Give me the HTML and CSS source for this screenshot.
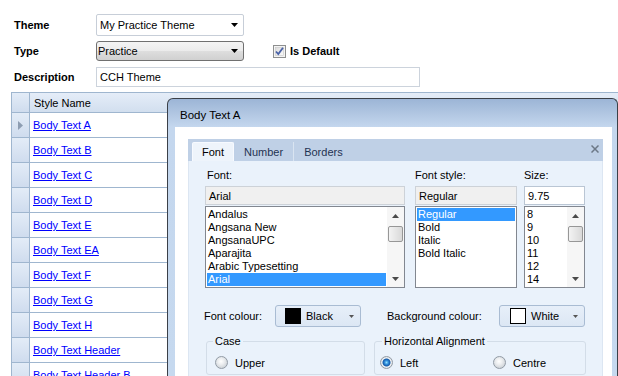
FILE: index.html
```html
<!DOCTYPE html>
<html>
<head>
<meta charset="utf-8">
<title>Theme</title>
<link rel="stylesheet" href="styles.css">
</head>
<body>
<div class="form">
  <div class="frow r1">
    <span class="lbl">Theme</span>
    <div class="combo theme"><span>My Practice Theme</span><svg class="arr" width="7" height="4" viewBox="0 0 7 4"><path d="M0 0H7L3.5 4Z" fill="#000"/></svg></div>
  </div>
  <div class="frow r2">
    <span class="lbl">Type</span>
    <div class="combo type"><span>Practice</span><svg class="arr" width="7" height="4" viewBox="0 0 7 4"><path d="M0 0H7L3.5 4Z" fill="#000"/></svg></div>
    <svg class="chk" width="13" height="13" viewBox="0 0 13 13">
      <defs><linearGradient id="cg" x1="0" y1="0" x2="1" y2="1"><stop offset="0" stop-color="#dcdcdc"/><stop offset="1" stop-color="#fbfbfb"/></linearGradient></defs>
      <rect x="0.5" y="0.5" width="12" height="12" fill="#f4f4f4" stroke="#8e8f8f"/>
      <rect x="2.5" y="2.5" width="8" height="8" fill="url(#cg)" stroke="#c8c8c8" stroke-width="0.6"/>
      <path d="M3 6.5L5.3 9L10 2.8" fill="none" stroke="#4a62a8" stroke-width="1.8"/>
    </svg>
    <span class="chklbl">Is Default</span>
  </div>
  <div class="frow r3">
    <span class="lbl">Description</span>
    <div class="text desc">CCH Theme</div>
  </div>
</div>

<div class="grid">
  <div class="grow ghead"><div class="rh"></div><div class="cell">Style Name</div></div>
  <div class="grow"><div class="rh"><svg width="5" height="9" viewBox="0 0 5 9"><path d="M0 0L5 4.5L0 9Z" fill="#8d9db2"/></svg></div><div class="cell"><a href="#">Body Text A</a></div></div>
  <div class="grow"><div class="rh"></div><div class="cell"><a href="#">Body Text B</a></div></div>
  <div class="grow"><div class="rh"></div><div class="cell"><a href="#">Body Text C</a></div></div>
  <div class="grow"><div class="rh"></div><div class="cell"><a href="#">Body Text D</a></div></div>
  <div class="grow"><div class="rh"></div><div class="cell"><a href="#">Body Text E</a></div></div>
  <div class="grow"><div class="rh"></div><div class="cell"><a href="#">Body Text EA</a></div></div>
  <div class="grow"><div class="rh"></div><div class="cell"><a href="#">Body Text F</a></div></div>
  <div class="grow"><div class="rh"></div><div class="cell"><a href="#">Body Text G</a></div></div>
  <div class="grow"><div class="rh"></div><div class="cell"><a href="#">Body Text H</a></div></div>
  <div class="grow"><div class="rh"></div><div class="cell"><a href="#">Body Text Header</a></div></div>
  <div class="grow"><div class="rh"></div><div class="cell"><a href="#">Body Text Header B</a></div></div>
</div>

<div class="dialog">
  <div class="title">Body Text A</div>
  <div class="client">
    <div class="tabs">
      <div class="tabstrip">
        <div class="tab sel">Font</div>
        <div class="tab sep">Number</div>
        <div class="tab">Borders</div>
        <svg class="close" width="8" height="8" viewBox="0 0 8 8"><path d="M0.5 0.5L7.5 7.5M7.5 0.5L0.5 7.5" stroke="#6c7886" stroke-width="1.5"/></svg>
      </div>
      <div class="panel">
        <div class="fontrow">
          <div class="col c1">
            <div class="flabel">Font:</div>
            <div class="tbox ro">Arial</div>
            <div class="list">
              <div class="items">
                <div class="it">Andalus</div>
                <div class="it">Angsana New</div>
                <div class="it">AngsanaUPC</div>
                <div class="it">Aparajita</div>
                <div class="it">Arabic Typesetting</div>
                <div class="it on">Arial</div>
              </div>
              <div class="sb">
                <div class="sbtn"><svg width="7" height="4" viewBox="0 0 7 4"><path d="M0 4H7L3.5 0Z" fill="#4a4a4a"/></svg></div>
                <div class="thumb"></div>
                <div class="sbtn dn"><svg width="7" height="4" viewBox="0 0 7 4"><path d="M0 0H7L3.5 4Z" fill="#4a4a4a"/></svg></div>
              </div>
            </div>
          </div>
          <div class="col c2">
            <div class="flabel">Font style:</div>
            <div class="tbox ro">Regular</div>
            <div class="list">
              <div class="items">
                <div class="it on">Regular</div>
                <div class="it">Bold</div>
                <div class="it">Italic</div>
                <div class="it">Bold Italic</div>
              </div>
            </div>
          </div>
          <div class="col c3">
            <div class="flabel">Size:</div>
            <div class="tbox">9.75</div>
            <div class="list">
              <div class="items">
                <div class="it">8</div>
                <div class="it">9</div>
                <div class="it">10</div>
                <div class="it">11</div>
                <div class="it">12</div>
                <div class="it">14</div>
              </div>
              <div class="sb">
                <div class="sbtn"><svg width="7" height="4" viewBox="0 0 7 4"><path d="M0 4H7L3.5 0Z" fill="#4a4a4a"/></svg></div>
                <div class="thumb"></div>
                <div class="sbtn dn"><svg width="7" height="4" viewBox="0 0 7 4"><path d="M0 0H7L3.5 4Z" fill="#4a4a4a"/></svg></div>
              </div>
            </div>
          </div>
        </div>

        <div class="colrow">
          <span class="clabel l1">Font colour:</span>
          <div class="cbtn b1"><span class="sw black"></span><span class="cname">Black</span><svg class="carr" width="5" height="3" viewBox="0 0 5 3"><path d="M0 0H5L2.5 3Z" fill="#555"/></svg></div>
          <span class="clabel l2">Background colour:</span>
          <div class="cbtn b2"><span class="sw white"></span><span class="cname">White</span><svg class="carr" width="5" height="3" viewBox="0 0 5 3"><path d="M0 0H5L2.5 3Z" fill="#555"/></svg></div>
        </div>

        <div class="groups">
          <fieldset class="grp case">
            <legend>Case</legend>
            <div class="ropts">
              <label class="ropt"><span class="radio"></span><span>Upper</span></label>
            </div>
          </fieldset>
          <fieldset class="grp ha">
            <legend>Horizontal Alignment</legend>
            <div class="ropts">
              <label class="ropt w1"><span class="radio on"></span><span>Left</span></label>
              <label class="ropt"><span class="radio"></span><span>Centre</span></label>
            </div>
          </fieldset>
        </div>
      </div>
    </div>
  </div>
</div>
</body>
</html>
```

FILE: styles.css
```css
html, body {
  margin: 0;
  padding: 0;
  height: 376px;
  overflow: hidden;
  background: #fff;
}
body {
  font: 11px "Liberation Sans", Arial, sans-serif;
  color: #000;
}

/* top form */
.form {
  display: flex;
  flex-direction: column;
  padding: 14px 0 0 14px;
}
.frow {
  display: flex;
  align-items: center;
}
.r1 { height: 22px; }
.r2 { height: 20px; margin-top: 5px; }
.r3 { height: 20px; margin-top: 6px; }
.lbl {
  width: 82px;
  font-weight: bold;
}
.combo {
  box-sizing: border-box;
  height: 100%;
  width: 148px;
  display: flex;
  align-items: center;
  justify-content: space-between;
  padding: 0 5px 0 3px;
}
.theme {
  border: 1px solid #c7ced8;
  border-radius: 2px;
  background: #fff;
}
.type {
  border: 1px solid #707070;
  border-radius: 3px;
  padding-left: 1px;
  background: linear-gradient(#f4f4f4, #ebebeb 50%, #dedede 51%, #d0d0d0);
}
.chk { margin-left: 29px; }
.chklbl {
  margin-left: 4px;
  font-weight: bold;
}
.text {
  box-sizing: border-box;
  height: 100%;
  width: 324px;
  border: 1px solid #ccd3dc;
  padding-left: 3px;
  display: flex;
  align-items: center;
}

/* grid */
.grid {
  margin: 5px 0 0 11px;
  width: 606px;
  border-top: 1px solid #9fb6cf;
  border-left: 1px solid #9fb6cf;
}
.grow {
  display: flex;
  box-sizing: border-box;
  height: 25px;
  border-bottom: 1px solid #9fb6cf;
}
.ghead {
  height: 20px;
  background: linear-gradient(#e5edf8, #d2dfef);
}
.rh {
  width: 17px;
  border-right: 1px solid #9fb6cf;
  background: linear-gradient(#e3ecf7, #cfdcee);
  display: flex;
  align-items: center;
  justify-content: center;
}
.cell {
  flex: 1;
  display: flex;
  align-items: center;
  padding-left: 3px;
}
.ghead .cell { padding-left: 4px; }
.cell a {
  color: #0000ff;
  text-decoration: underline;
}

/* dialog */
.dialog {
  position: absolute;
  left: 167px;
  top: 98px;
  width: 451px;
  height: 278px;
  box-sizing: border-box;
  border: 1px solid #3b4048;
  border-bottom: none;
  border-radius: 6px 6px 0 0;
  padding: 0 5px 0 7px;
  background: linear-gradient(#9cb5d6 0, #b3c8e3 16px, #c4d7ee 28px, #c6d9ef);
  display: flex;
  flex-direction: column;
}
.title {
  height: 28px;
  box-sizing: border-box;
  padding: 4px 0 0 5px;
  line-height: 24px;
  font-size: 11.5px;
  color: #000;
}
.client {
  flex: 1;
  background: #fff;
  padding: 12px 9px 0 13px;
}
.tabs {
  display: flex;
  flex-direction: column;
  height: 100%;
}
.tabstrip {
  position: relative;
  height: 22px;
  box-sizing: border-box;
  background: #bfd0e6;
  display: flex;
  align-items: flex-end;
  padding-left: 4px;
}
.tab {
  height: 19px;
  box-sizing: border-box;
  padding: 0 10px;
  display: flex;
  align-items: center;
  color: #1f3352;
}
.tab.sel {
  background: #eef4fb;
  border: 1px solid #f7faff;
  border-bottom: none;
  border-radius: 2px 2px 0 0;
  color: #000;
  padding: 0 9px;
}
.tab.sep {
  border-right: 1px solid #d9e4f1;
}
.close {
  position: absolute;
  right: 4px;
  top: 6px;
}
.panel {
  flex: 1;
  background: #eaf2fb;
  border: 1px solid #dce6f2;
  border-top: none;
  border-bottom: none;
  padding: 8px 0 0 16px;
  overflow: hidden;
}

.fontrow { display: flex; }
.col { display: flex; flex-direction: column; }
.c1 { width: 200px; }
.c2 { width: 102px; margin-left: 10px; }
.c3 { width: 61px; margin-left: 7px; }
.flabel {
  height: 13px;
  line-height: 13px;
  padding-left: 2px;
}
.c2 .flabel, .c3 .flabel { padding-left: 0; }
.tbox {
  margin-top: 4px;
  height: 19px;
  box-sizing: border-box;
  border: 1px solid #bac6d4;
  background: #fff;
  padding-left: 3px;
  display: flex;
  align-items: center;
}
.tbox.ro {
  background: #f0f0f0;
  border-color: #cdd2d8;
}
.list {
  margin-top: 1px;
  height: 82px;
  box-sizing: border-box;
  border: 1px solid #828790;
  background: #fff;
  display: flex;
}
.items {
  flex: 1;
  padding: 1px;
}
.it {
  height: 13px;
  line-height: 13px;
  padding-left: 1px;
  white-space: nowrap;
}
.it.on {
  background: #3399ff;
  color: #fff;
}
.sb {
  width: 17px;
  background: #f6f6f6;
  display: flex;
  flex-direction: column;
}
.sbtn {
  height: 17px;
  display: flex;
  align-items: center;
  justify-content: center;
}
.sbtn.dn { margin-top: auto; }
.thumb {
  margin: 2px 1px 0 1px;
  height: 16px;
  box-sizing: border-box;
  border: 1px solid #979797;
  border-radius: 2px;
  background: linear-gradient(90deg, #f3f3f3, #e6e6e6 50%, #d9d9d9);
}

/* colour row */
.colrow {
  display: flex;
  align-items: center;
  height: 22px;
  margin: 17px 0 0 -1px;
}
.clabel.l1 { width: 71px; }
.clabel.l2 { width: 112px; margin-left: 26px; }
.cbtn {
  width: 86px;
  height: 22px;
  box-sizing: border-box;
  border: 1px solid #a9bcd3;
  border-radius: 3px;
  background: linear-gradient(#e7eff9, #dce7f4);
  display: flex;
  align-items: center;
  padding: 0 6px 0 9px;
}
.cbtn.b2 { padding-left: 10px; }
.sw {
  width: 16px;
  height: 16px;
  box-sizing: border-box;
  border: 1px solid #000;
}
.sw.black { background: #000; }
.sw.white { background: #fff; }
.cname { margin-left: 5px; }
.carr { margin-left: auto; }

/* groups */
.groups {
  display: flex;
  margin-top: 8px;
}
.grp {
  margin: 0;
  min-height: 40px;
  box-sizing: border-box;
  border: 1px solid #d3dde8;
  border-radius: 3px;
  padding: 8px 0 0 8px;
}
.grp legend {
  padding: 0 2px;
  margin-left: -2px;
  line-height: 13px;
}
.case {
  width: 159px;
  margin-left: 1px;
}
.ha {
  width: 212px;
  margin-left: 9px;
  padding-left: 5px;
}
.ha legend { margin-left: 2px; }
.ropts {
  display: flex;
  align-items: center;
}
.ropt {
  display: flex;
  align-items: center;
  gap: 7px;
}
.ropt.w1 { width: 113px; }
.radio {
  width: 13px;
  height: 13px;
  box-sizing: border-box;
  border-radius: 50%;
  border: 1px solid #929ba5;
  background: radial-gradient(circle at 45% 40%, #ffffff 0, #eceef0 35%, #cfd4d9 75%, #bfc5cb);
}
.radio.on {
  background: radial-gradient(circle at 50% 50%, #8fe0ff 0, #2f8ad8 2px, #165ba8 3.5px, #f2f4f6 4.5px, #d4d9de 6px);
}
```
